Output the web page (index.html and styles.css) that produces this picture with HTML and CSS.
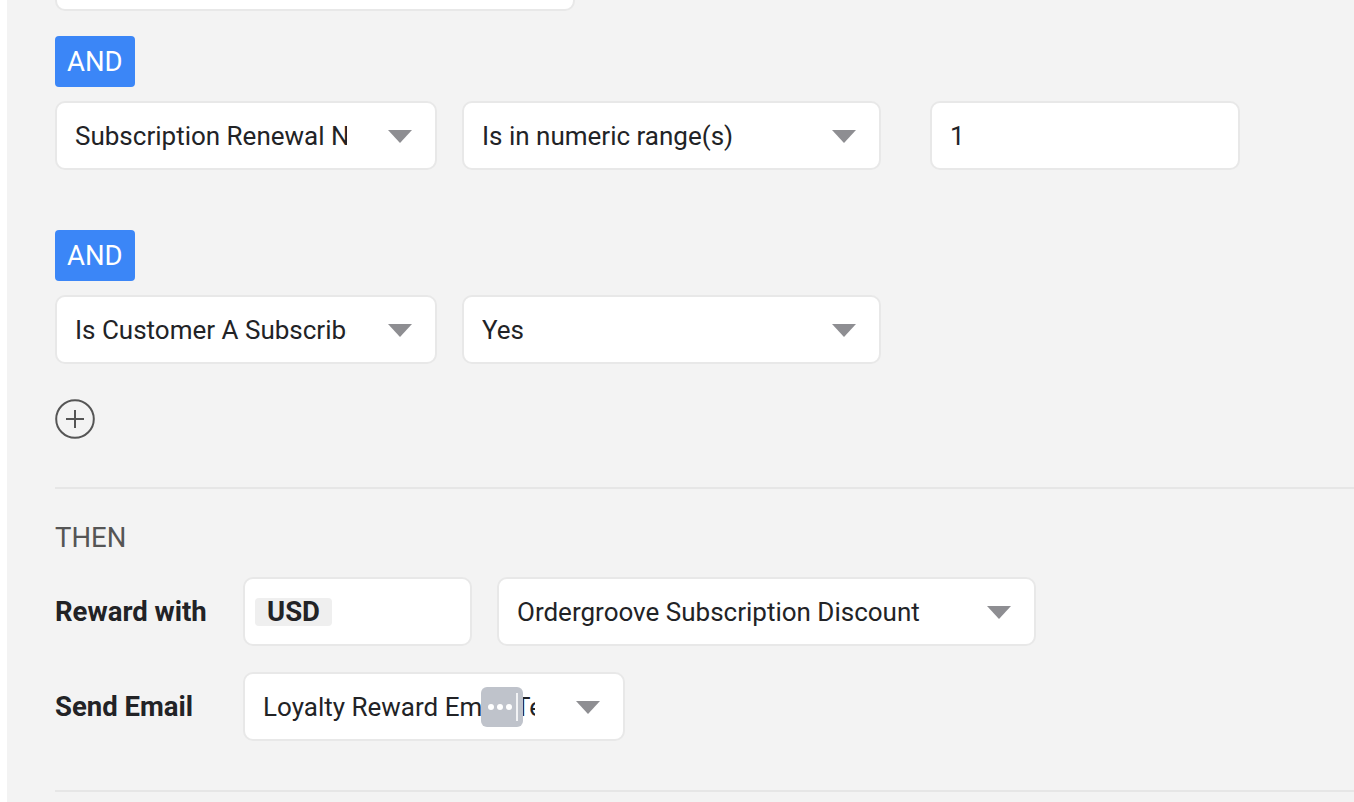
FILE: index.html
```html
<!DOCTYPE html>
<html>
<head>
<meta charset="utf-8">
<link rel="stylesheet" href="styles.css">
</head>
<body>
<div class="panel">
  <div class="field top-field"></div>

  <div class="badge and-1">AND</div>
  <div class="row">
    <div class="field select w382"><span class="value">Subscription Renewal Number</span><span class="arrow"></span></div>
    <div class="field select w419"><span class="value">Is in numeric range(s)</span><span class="arrow"></span></div>
    <div class="field input w310"><span class="value">1</span></div>
  </div>

  <div class="badge and-2">AND</div>
  <div class="row">
    <div class="field select w382"><span class="value">Is Customer A Subscriber</span><span class="arrow"></span></div>
    <div class="field select w419"><span class="value">Yes</span><span class="arrow"></span></div>
  </div>

  <div class="add">
    <svg width="40" height="40" viewBox="0 0 40 40"><circle cx="20" cy="20" r="18.8" fill="none" stroke="#555" stroke-width="2"/><path d="M20 11v18M11 20h18" stroke="#555" stroke-width="2" fill="none"/></svg>
  </div>

  <div class="divider d1"></div>

  <div class="then">THEN</div>

  <div class="row action r1">
    <div class="label">Reward with</div>
    <div class="field input w229"><span class="chip">USD</span></div>
    <div class="field select w539"><span class="value">Ordergroove Subscription Discount</span><span class="arrow"></span></div>
  </div>
  <div class="row action r2">
    <div class="label">Send Email</div>
    <div class="field select w382 email">
      <span class="value">Loyalty Reward Email Template</span><span class="arrow"></span>
      <span class="more"><i></i><i></i><i></i><b></b></span>
    </div>
  </div>

  <div class="divider d2"></div>
</div>
</body>
</html>
```

FILE: styles.css
```css
html, body {
  margin: 0;
  padding: 0;
  background: #ffffff;
  height: 802px;
  overflow: hidden;
}
body {
  font-family: Roboto, "Liberation Sans", sans-serif;
  color: #222326;
}
.panel {
  margin-left: 7px;
  background: #f3f3f3;
  height: 802px;
  padding-left: 48px;
  overflow: hidden;
}
.field {
  box-sizing: border-box;
  height: 69px;
  background: #fff;
  border: 2px solid #e8e8e8;
  border-radius: 10px;
  display: flex;
  align-items: center;
  font-size: 26px;
  flex: none;
  position: relative;
}
.top-field {
  width: 520px;
  margin-top: -58px;
}
.select {
  padding: 0 23px 0 18px;
}
.input {
  padding: 0 18px;
}
.select .value {
  flex: 1;
  min-width: 0;
  overflow: hidden;
  white-space: nowrap;
  margin-right: 41px;
}
.arrow {
  flex: none;
  width: 0;
  height: 0;
  border-left: 12px solid transparent;
  border-right: 12px solid transparent;
  border-top: 13px solid #8e8e92;
  margin-top: 2px;
}
.w382 { width: 382px; }
.w419 { width: 419px; }
.w310 { width: 310px; margin-left: 24px; }
.w229 { width: 229px; }
.w539 { width: 539px; }
.input.w229 { padding-left: 10px; }

.row {
  display: flex;
  gap: 25px;
  align-items: center;
}
.badge {
  display: inline-block;
  background: #3b86f7;
  color: #fff;
  font-size: 27.5px;
  line-height: 51px;
  height: 51px;
  padding: 0 12px;
  border-radius: 4px;
  margin-bottom: 14px;
}
.and-1 { margin-top: 25px; }
.and-2 { margin-top: 60px; }

.add {
  margin-top: 35px;
  width: 40px;
  height: 40px;
}
.add svg { display: block; }

.divider {
  height: 2px;
  background: #e6e6e6;
}
.d1 { margin-top: 48px; }
.then {
  margin-top: 33px;
  font-size: 27.5px;
  line-height: 32px;
  color: #555;
}
.r1 { margin-top: 23px; gap: 25px; }
.r2 { margin-top: 26px; }
.label {
  width: 163px;
  flex: none;
  font-size: 27.5px;
  font-weight: 700;
  color: #222326;
}
.chip {
  background: #efefef;
  border-radius: 4px;
  font-weight: 700;
  font-size: 27.5px;
  padding: 0 12px;
  height: 28px;
  line-height: 28px;
}
.more {
  position: absolute;
  left: 236px;
  top: 13px;
  width: 42px;
  height: 40px;
  background: #bfc3cb;
  border-radius: 6px;
}
.more i {
  position: absolute;
  top: 17px;
  width: 6px;
  height: 6px;
  border-radius: 50%;
  background: #fff;
}
.more i:nth-child(1) { left: 7px; }
.more i:nth-child(2) { left: 16px; }
.more i:nth-child(3) { left: 25px; }
.more b {
  position: absolute;
  left: 35px;
  top: 6px;
  width: 2px;
  height: 28px;
  background: #fff;
  opacity: 0.8;
}
.d2 { margin-top: 49px; }
```
